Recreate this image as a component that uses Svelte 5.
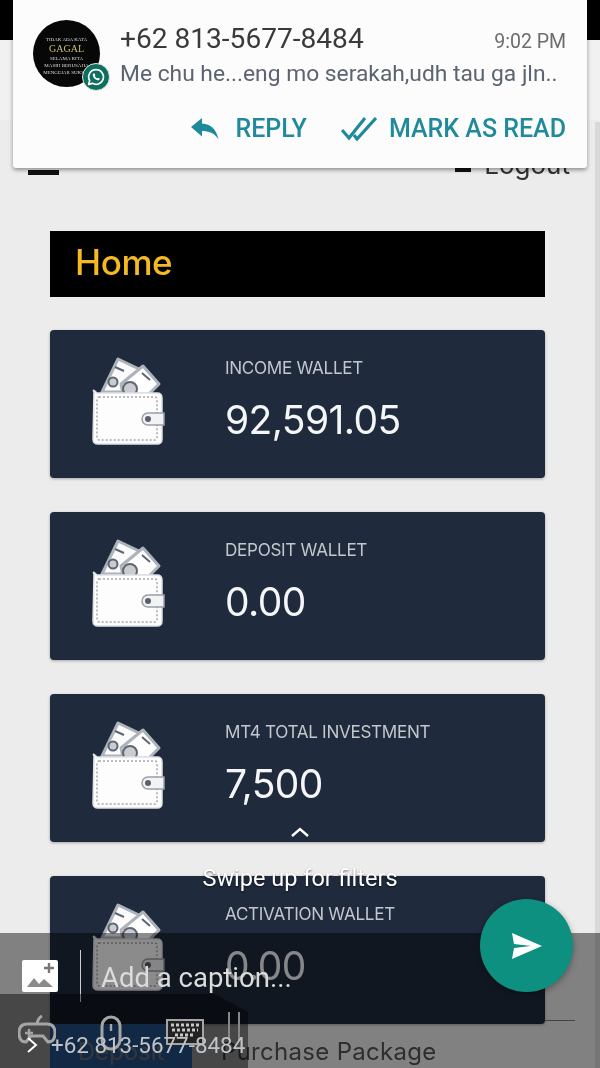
<script>
  const wallets = [
    { label: "INCOME WALLET", value: "92,591.05" },
    { label: "DEPOSIT WALLET", value: "0.00" },
    { label: "MT4 TOTAL INVESTMENT", value: "7,500" },
    { label: "ACTIVATION WALLET", value: "0.00" }
  ];
</script>

{#snippet walletIcon()}
  <svg class="wallet" viewBox="0 0 76 90" width="76" height="90">
    <g stroke="#aeb3ba" stroke-width="3" stroke-linejoin="round">
      <path d="M11 36 L27 3 L48 13 L38 36 Z" fill="#fbfbfb" />
      <path d="M30 28 L52 10 L68 28 L58 38 L32 38 Z" fill="#fff" />
    </g>
    <g fill="none" stroke="#5d6673" stroke-width="2">
      <circle cx="39" cy="33" r="7" fill="#c9ccd1" />
      <circle cx="22" cy="26" r="4.500" fill="#c9ccd1" />
      <path d="M24 11 l9 4 M51 17 l8 7" />
    </g>
    <path d="M3 36 Q1 32 6 37 H66 Q71 37 71 42 V83 Q71 88 66 88 H7 Q2 88 2 83 Z" fill="#fdfdfd" stroke="#dfe1e4" stroke-width="1.500" />
    <rect x="6" y="41" width="60" height="43" rx="2" fill="none" stroke="#a2a7ae" stroke-width="1.500" stroke-dasharray="2 2" />
    <path d="M57 57 H73 V69 H57 a6 6 0 0 1 0 -12 Z" fill="#f2f3f4" stroke="#9aa0a8" stroke-width="1.500" />
    <circle cx="57" cy="63" r="3" fill="#59616d" />
  </svg>
{/snippet}

<div class="page">
  <div class="topbar"></div>
  <div class="subbar"></div>

  <main class="content">
    <div class="navrow">
      <span class="burger"></span>
      <span class="logout"><i></i>Logout</span>
    </div>

    <h1 class="home">Home</h1>

    {#each wallets as w}
      <section class="card">
        <div class="card-icon">{@render walletIcon()}</div>
        <div class="card-text">
          <div class="label">{w.label}</div>
          <div class="value">{w.value}</div>
        </div>
      </section>
    {/each}

    <div class="actions">
      <span class="btn-deposit">Deposit</span>
      <span class="btn-purchase">Purchase Package</span>
    </div>
  </main>

  <div class="scrollbar"></div>
  <div class="edge-line"></div>

  <div class="notif">
    <div class="notif-top">
      <div class="avatar">
        <div class="disc">
          <span class="a1">TIDAK ADA KATA</span>
          <span class="a2">GAGAL</span>
          <span class="a1">SELAMA KITA</span>
          <span class="a1">MASIH BERUSAHA</span>
          <span class="a1">MENGEJAR SUKSES</span>
        </div>
        <span class="wa">
          <svg viewBox="0 0 24 24" width="20" height="20">
            <path d="M12 3.2a8.8 8.8 0 0 0-7.6 13.2L3.2 20.8l4.5-1.2A8.8 8.8 0 1 0 12 3.2Z" fill="none" stroke="#fff" stroke-width="2" stroke-linejoin="round" />
            <path d="M8.8 7.8c-.9.8-1 2.100-.3 3.600 1 2 2.600 3.500 4.600 4.300 1.300.5 2.500.2 3.100-.8l.3-1-2.100-1.100-.9 1c-1.300-.5-2.400-1.600-3-2.900l.8-.9-.9-2.200Z" fill="#fff" />
          </svg>
        </span>
      </div>
      <div class="notif-body">
        <div class="notif-head">
          <span class="phone">+62 813-5677-8484</span>
          <span class="time">9:02 PM</span>
        </div>
        <div class="message">Me chu he...eng mo serakah,udh tau ga jln..</div>
      </div>
    </div>
    <div class="notif-actions">
      <span class="act reply">
        <svg viewBox="0 0 28 22" width="28" height="22">
          <path d="M0 9 L11 0 V5.500 C20 6 25 11 27.500 21 C23 15 18 13 11 13 V18.500 Z" fill="#1f8a9c" />
        </svg>
        REPLY
      </span>
      <span class="act read">
        <svg viewBox="0 0 36 24" width="36" height="24">
          <path d="M1 13 L8 21 L24 1 M13 18 L16 22 L35 1" fill="none" stroke="#1f8a9c" stroke-width="3.200" />
        </svg>
        MARK AS READ
      </span>
    </div>
  </div>

  <div class="swipe">
    <svg viewBox="0 0 20 12" width="20" height="12">
      <path d="M2 10 L10 3 L18 10" fill="none" stroke="#fff" stroke-width="2.400" />
    </svg>
    <span>Swipe up for filters</span>
  </div>

  <div class="caption-bar">
    <div class="caption-row">
      <svg class="add-photo" viewBox="0 0 36 32" width="36" height="32">
        <rect width="36" height="32" rx="2" fill="#fff" />
        <path d="M5 27 L12 18 L17 24 L22 19 L31 27 Z" fill="#8a8a8a" />
        <path d="M27 3 V13 M22 8 H32" stroke="#777" stroke-width="2.400" />
      </svg>
      <span class="divider"></span>
      <span class="caption">Add a caption...</span>
    </div>
  </div>

  <div class="recipient">
    <div class="ghost-icons">
      <svg viewBox="0 0 38 30" width="38" height="30">
        <path d="M9 9 H29 Q37 9 37 18 Q37 27 30 27 L25 21 H13 L8 27 Q1 27 1 18 Q1 9 9 9 Z M19 9 Q20 3 24 1" fill="none" stroke="#a5a5a5" stroke-width="3" />
        <path d="M7 18 H15 M11 14 V22" stroke="#a5a5a5" stroke-width="2.500" />
      </svg>
      <svg viewBox="0 0 22 36" width="22" height="36">
        <rect x="2" y="2" width="18" height="32" rx="9" fill="none" stroke="#a5a5a5" stroke-width="3" />
        <path d="M11 9 V16" stroke="#a5a5a5" stroke-width="2.400" />
      </svg>
      <svg class="keyboard" viewBox="0 0 38 26" width="38" height="26">
        <rect x="1" y="1" width="36" height="24" fill="#222" stroke="#a5a5a5" stroke-width="2" />
        <path d="M5 6 H33 M6 11 H32 M9 16 H29" stroke="#c8c8c8" stroke-width="3" stroke-dasharray="3 2" />
      </svg>
      <span class="bars"></span>
    </div>
    <svg class="chev" viewBox="0 0 12 16" width="12" height="16">
      <path d="M2 1 L10 8 L2 15" fill="none" stroke="#fff" stroke-width="2" />
    </svg>
    <span class="recipient-text">+62 813-5677-8484</span>
  </div>

  <button class="send" aria-label="Send">
    <svg viewBox="0 0 32 28" width="32" height="28">
      <path d="M1 1 L31 14 L1 27 L3 16 L20 14 L3 12 Z" fill="#fff" />
    </svg>
  </button>
</div>

<style>
  :global(body) {
    margin: 0;
    background: #ececec;
  }

  .page {
    position: relative;
    width: 600px;
    height: 1068px;
    overflow: hidden;
    background: #ececec;
    font-family: "Inter", "Liberation Sans", sans-serif;
    filter: blur(0.4px);
  }

  .topbar {
    height: 40px;
    background: #000;
  }

  .subbar {
    height: 80px;
    background: #f1f1f1;
  }

  .content {
    padding: 0 55px 0 50px;
  }

  .navrow {
    display: flex;
    justify-content: space-between;
    align-items: flex-start;
    height: 111px;
    margin: 0 -25px 0 -22px;
    padding-top: 35px;
    box-sizing: border-box;
  }

  .burger {
    width: 31px;
    height: 20px;
    border-bottom: 5px solid #111;
    box-sizing: border-box;
  }

  .logout {
    display: flex;
    align-items: center;
    gap: 13px;
    font-size: 26px;
    color: #333;
    line-height: 20px;
  }

  .logout i {
    width: 16px;
    height: 14px;
    background: #111;
  }

  .home {
    margin: 0 0 33px;
    height: 66px;
    padding-left: 25px;
    background: #000;
    color: #f5b921;
    font-size: 35px;
    font-weight: 500;
    line-height: 62px;
    letter-spacing: -0.4px;
  }

  .card {
    display: flex;
    align-items: center;
    height: 148px;
    margin-bottom: 34px;
    background: #1f2a3c;
    border-radius: 4px;
    box-shadow: 0 1px 3px rgba(0, 0, 0, 0.3);
  }

  .card-icon {
    display: flex;
    width: 175px;
    padding-left: 41px;
    box-sizing: border-box;
    margin-top: -6px;
  }

  .card-text {
    color: #fff;
    margin-top: -5px;
  }

  .label {
    font-size: 17.100px;
    color: #c3c7cd;
    letter-spacing: -0.3px;
    line-height: 24px;
  }

  .value {
    font-size: 39px;
    line-height: 56px;
    margin-top: 12px;
    letter-spacing: -0.6px;
    color: #f5f6f7;
  }

  .actions {
    display: flex;
    align-items: center;
    height: 44px;
    margin-top: -34px;
  }

  .btn-deposit {
    width: 142px;
    height: 44px;
    background: #3e8ae8;
    color: #b0b8c4;
    font-size: 24px;
    text-align: center;
    line-height: 56px;
    overflow: hidden;
  }

  .btn-purchase {
    margin-left: 29px;
    color: #555;
    font-size: 24px;
    line-height: 56px;
    height: 44px;
    letter-spacing: 0.3px;
  }

  .scrollbar {
    position: absolute;
    right: 0;
    top: 122px;
    bottom: 0;
    width: 5px;
    background: #d8d8d8;
  }

  .edge-line {
    position: absolute;
    left: 545px;
    top: 1020px;
    width: 30px;
    height: 1px;
    background: #7d7d7d;
  }

  .notif {
    position: absolute;
    left: 13px;
    top: 0;
    width: 574px;
    height: 168px;
    box-sizing: border-box;
    padding: 20px 21px 0 20px;
    background: #fcfcfc;
    border-radius: 0 0 3px 3px;
    box-shadow: 0 2px 4px rgba(0, 0, 0, 0.4);
    font-family: "Roboto", sans-serif;
  }

  .notif-top {
    display: flex;
    gap: 20px;
  }

  .avatar {
    position: relative;
    width: 67px;
    height: 67px;
    flex: none;
  }

  .disc {
    width: 67px;
    height: 67px;
    border-radius: 50%;
    background: #070707;
    overflow: hidden;
    display: flex;
    flex-direction: column;
    align-items: center;
    padding-top: 16px;
    box-sizing: border-box;
    font-family: "Liberation Serif", serif;
    color: #ddd;
    white-space: nowrap;
  }

  .a1 {
    font-size: 5px;
    line-height: 7px;
  }

  .a2 {
    font-size: 10px;
    line-height: 12px;
    color: #c8c46a;
  }

  .wa {
    position: absolute;
    left: 49px;
    top: 43px;
    width: 28px;
    height: 28px;
    border-radius: 50%;
    background: #0f6f5f;
    border: 1px solid #e8e8e8;
    display: flex;
    align-items: center;
    justify-content: center;
    box-sizing: border-box;
  }

  .notif-body {
    flex: 1;
    min-width: 0;
  }

  .notif-head {
    display: flex;
    justify-content: space-between;
    align-items: baseline;
    margin-top: 2px;
  }

  .phone {
    font-size: 28.100px;
    line-height: 34px;
    color: #3a3a3a;
  }

  .time {
    font-size: 19.500px;
    color: #6d6d6d;
  }

  .message {
    font-size: 22.800px;
    line-height: 36px;
    color: #5b6470;
    white-space: nowrap;
  }

  .notif-actions {
    display: flex;
    justify-content: flex-end;
    gap: 34px;
    margin-top: 22px;
  }

  .act {
    display: flex;
    align-items: center;
    font-size: 25px;
    font-weight: 500;
    line-height: 30px;
    color: #1f8a9c;
  }

  .reply {
    gap: 16px;
  }

  .read {
    gap: 12px;
  }

  .swipe {
    position: absolute;
    left: 0;
    right: 0;
    top: 826px;
    display: flex;
    flex-direction: column;
    align-items: center;
    gap: 27px;
    color: #fff;
    font-family: "Roboto", sans-serif;
    font-size: 23.500px;
    line-height: 26px;
    text-shadow: 0 1px 2px rgba(0, 0, 0, 0.55);
  }

  .caption-bar {
    position: absolute;
    left: 0;
    right: 0;
    top: 933px;
    bottom: 0;
    background: rgba(0, 0, 0, 0.45);
  }

  .caption-row {
    display: flex;
    align-items: center;
    height: 86px;
    padding-left: 22px;
  }

  .add-photo {
    flex: none;
  }

  .divider {
    width: 1px;
    height: 52px;
    margin-left: 22px;
    background: #cfcfcf;
  }

  .caption {
    margin-left: 20px;
    margin-top: 2px;
    font-family: "Roboto", sans-serif;
    font-size: 27.500px;
    color: #dcdcdc;
  }

  .recipient {
    position: absolute;
    left: 0;
    top: 994px;
    width: 248px;
    height: 74px;
    background: rgba(0, 0, 0, 0.45);
    clip-path: polygon(0 0, 215px 0, 248px 18px, 248px 100%, 0 100%);
  }

  .ghost-icons {
    display: flex;
    align-items: flex-start;
    gap: 44px;
    padding: 21px 0 0 18px;
  }

  .keyboard {
    margin-top: 4px;
  }

  .bars {
    width: 8px;
    height: 28px;
    margin: -3px 0 0 -20px;
    border-left: 2px solid #888;
    border-right: 2px solid #888;
  }

  .chev {
    position: absolute;
    left: 26px;
    top: 43px;
  }

  .recipient-text {
    position: absolute;
    left: 51px;
    top: 38px;
    font-family: "Roboto", sans-serif;
    font-size: 22.400px;
    line-height: 26px;
    color: #c0c4c8;
    white-space: nowrap;
  }

  .send {
    position: absolute;
    left: 480px;
    top: 899px;
    width: 93px;
    height: 93px;
    padding: 0;
    border: none;
    border-radius: 50%;
    background: #0e9080;
    box-shadow: 0 2px 6px rgba(0, 0, 0, 0.35);
    display: flex;
    align-items: center;
    justify-content: center;
  }
</style>
